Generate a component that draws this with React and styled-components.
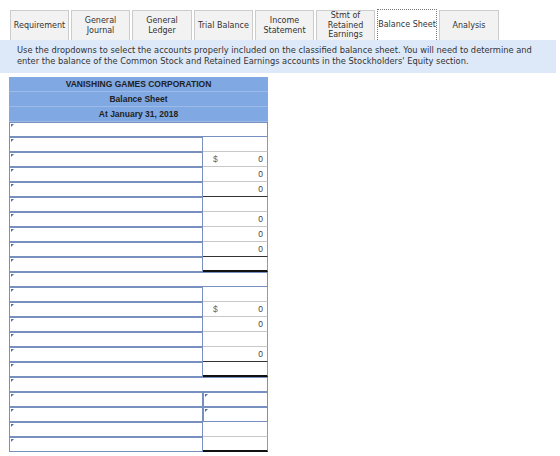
import React from 'react';
import styled, { createGlobalStyle } from 'styled-components';

const GlobalStyle = createGlobalStyle`
  html, body {
    margin: 0;
    padding: 0;
    background: #ffffff;
  }
  body {
    font-family: "DejaVu Sans", Verdana, sans-serif;
    color: #333333;
  }
`;

const Page = styled.main`
  width: 560px;
  height: 456px;
  overflow: hidden;
  padding-top: 9px;
  box-sizing: border-box;
`;

const TabBar = styled.nav`
  display: flex;
  align-items: flex-end;
  gap: 2px;
  padding-left: 10px;
  height: 31px;
`;

const Tab = styled.div`
  width: ${(p) => p.$width}px;
  height: ${(p) => (p.$active ? 31 : 30)}px;
  box-sizing: border-box;
  display: flex;
  align-items: center;
  justify-content: center;
  text-align: center;
  font-size: 8px;
  line-height: 9.5px;
  color: #333333;
  background: ${(p) => (p.$active ? '#ffffff' : '#f2f2f2')};
  border: 1px ${(p) => (p.$active ? 'dotted #777777' : 'solid #cccccc')};
  border-bottom: none;
`;

const Instructions = styled.p`
  margin: 0 4px 0 0;
  padding: 5px 17px 4px;
  height: 33px;
  box-sizing: border-box;
  background: #dde9f8;
  font-size: 8.3px;
  line-height: 11px;
  white-space: nowrap;
  color: #333333;
`;

const Sheet = styled.section`
  margin: 4px 0 0 9px;
  width: 259px;
  display: grid;
  grid-template-columns: 194px 65px;
  font-family: "Liberation Sans", Arial, sans-serif;
`;

const Heading = styled.div`
  grid-column: 1 / -1;
  height: 15px;
  box-sizing: border-box;
  display: flex;
  align-items: center;
  justify-content: center;
  background: #80a8e2;
  border-bottom: 1px solid #9dbbe6;
  font-size: 8.5px;
  font-weight: bold;
  color: #222222;
`;

const Field = styled.div`
  position: relative;
  grid-column: ${(p) => (p.$full ? '1 / -1' : 'auto')};
  height: 15px;
  box-sizing: border-box;
  background: #ffffff;
  border: 1px solid #7890c0;

  &::before {
    content: '';
    position: absolute;
    top: 1px;
    left: 1px;
    border-top: 3px solid #4a6fb5;
    border-right: 3px solid transparent;
  }
`;

const Amount = styled.div`
  height: 15px;
  box-sizing: border-box;
  display: flex;
  align-items: center;
  justify-content: space-between;
  padding: 0 4px 0 10px;
  border-right: 1px solid #9a9a9a;
  border-bottom: ${(p) =>
    p.$rule === 'double'
      ? '2px solid #111111'
      : p.$rule === 'single'
      ? '1px solid #333333'
      : '1px solid #c8c8c8'};
  font-size: 8.5px;
  color: #444444;
`;

const Dollar = styled.span`
  color: #666666;
`;

const tabs = [
  { label: 'Requirement', width: 59 },
  { label: ['General', 'Journal'], width: 59 },
  { label: ['General', 'Ledger'], width: 60 },
  { label: 'Trial Balance', width: 59 },
  { label: ['Income', 'Statement'], width: 59 },
  { label: ['Stmt of', 'Retained', 'Earnings'], width: 59 },
  { label: 'Balance Sheet', width: 60, active: true },
  { label: 'Analysis', width: 60 },
];

// full = one wide dropdown, input = dropdown in the amount column too
const rows = [
  { full: true },
  {},
  { dollar: true, value: '0' },
  { value: '0' },
  { value: '0', rule: 'single' },
  {},
  { value: '0' },
  { value: '0' },
  { value: '0', rule: 'single' },
  { rule: 'double' },
  { full: true },
  {},
  { dollar: true, value: '0' },
  { value: '0' },
  {},
  { value: '0', rule: 'single' },
  { rule: 'double' },
  { full: true },
  { input: true },
  { input: true },
  {},
  { rule: 'double' },
];

function App() {
  return (
    <Page>
      <GlobalStyle />
      <TabBar>
        {tabs.map((t, i) => (
          <Tab key={i} $width={t.width} $active={t.active}>
            <span>
              {Array.isArray(t.label)
                ? t.label.map((l, j) => (
                    <React.Fragment key={j}>
                      {j > 0 && <br />}
                      {l}
                    </React.Fragment>
                  ))
                : t.label}
            </span>
          </Tab>
        ))}
      </TabBar>

      <Instructions>
        Use the dropdowns to select the accounts properly included on the classified balance sheet. You will need to determine and
        <br />
        enter the balance of the Common Stock and Retained Earnings accounts in the Stockholders' Equity section.
      </Instructions>

      <Sheet>
        <Heading>VANISHING GAMES CORPORATION</Heading>
        <Heading>Balance Sheet</Heading>
        <Heading>At January 31, 2018</Heading>
        {rows.map((r, i) =>
          r.full ? (
            <Field key={i} $full />
          ) : (
            <React.Fragment key={i}>
              <Field />
              {r.input ? (
                <Field />
              ) : (
                <Amount $rule={r.rule}>
                  <Dollar>{r.dollar ? '$' : ''}</Dollar>
                  <span>{r.value || ''}</span>
                </Amount>
              )}
            </React.Fragment>
          )
        )}
      </Sheet>
    </Page>
  );
}

export default App;
